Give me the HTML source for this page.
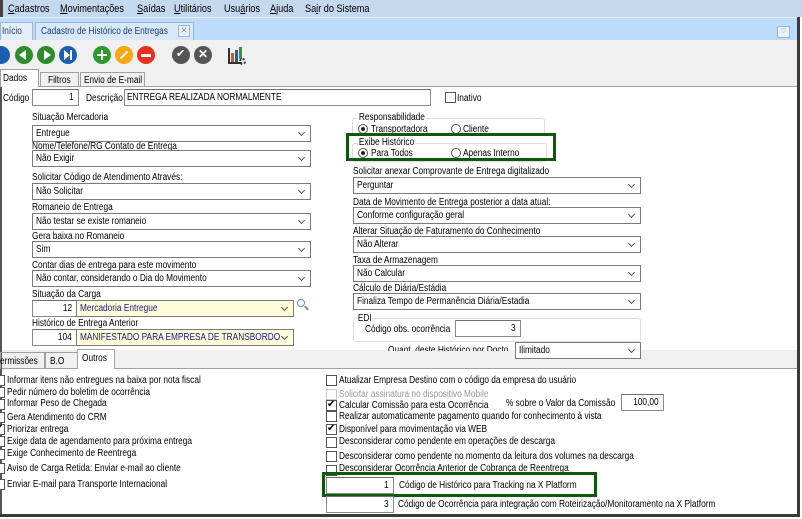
<!DOCTYPE html>
<html><head><meta charset="utf-8"><style>
*{box-sizing:border-box;margin:0;padding:0}
body{width:802px;height:519px;overflow:hidden;background:#fff;font-family:"Liberation Sans",Arial,sans-serif;font-size:10px;color:#000;position:relative}
.a{position:absolute;white-space:nowrap}
.t{transform:scaleX(.83);transform-origin:0 0}
.inp{position:absolute;background:#fff;border:1px solid #8a8a8a;border-top-color:#6e6e6e;height:17px;line-height:15px;padding:0 4px;font-size:10px;white-space:nowrap;overflow:hidden}
.inp span,.sel span{display:inline-block;transform:scaleX(.83);transform-origin:0 0}
.r{text-align:right}
.r span{transform-origin:100% 0}
.sel{position:absolute;background:#fff;border:1px solid #7a7a7a;height:17px;line-height:15px;padding:0 3px;font-size:10px;white-space:nowrap;overflow:hidden}
.sel:after{content:"";position:absolute;right:6px;top:4px;width:4px;height:4px;border-right:1.3px solid #555;border-bottom:1.3px solid #555;transform:rotate(45deg)}
.cb{position:absolute;width:11px;height:11px;border:1px solid #555;background:#fff}
.ck:before{content:"✔";position:absolute;left:0;top:-3px;font-size:10px;line-height:13px}
.fs{position:absolute;border:1px solid #dcdcdc;border-radius:3px}
.rad{position:absolute;width:10px;height:10px;border:1px solid #555;border-radius:50%;background:#fff}
.on:after{content:"";position:absolute;left:2px;top:2px;width:4px;height:4px;border-radius:50%;background:#222}
.ic{position:absolute;width:18px;height:18px;border-radius:50%;top:46px}
.grn{position:absolute;border:3px solid #0d5a0d}
.m{font-size:11px;top:3px}
</style></head><body>
<!-- menu -->
<div class="a" style="left:0;top:0;width:802px;height:17px;background:#c5d9ee"></div>
<div class="a" style="left:0;top:0;width:3px;height:17px;background:#444"></div>
<div class="a t m" style="left:8px"><u>C</u>adastros</div>
<div class="a t m" style="left:60px"><u>M</u>ovimentações</div>
<div class="a t m" style="left:137px"><u>S</u>aídas</div>
<div class="a t m" style="left:174px"><u>U</u>tilitários</div>
<div class="a t m" style="left:224px">Usu<u>á</u>rios</div>
<div class="a t m" style="left:270px"><u>A</u>juda</div>
<div class="a t m" style="left:305px">Sa<u>i</u>r do Sistema</div>
<!-- tabs bar -->
<div class="a" style="left:0;top:17px;width:797px;height:23px;background:#bddcfb;border-top:1px solid #e6f0fa"></div>
<div class="a" style="left:0;top:22px;width:33px;height:18px;background:#e4effb;border:1px solid #9cb6d2;border-bottom:none"></div>
<div class="a t" style="left:2px;top:26px;color:#1d3c6a">Início</div>
<div class="a" style="left:35px;top:22px;width:159px;height:18px;background:#d8e8f9;border:1px solid #9cb6d2;border-bottom:none"></div>
<div class="a t" style="left:41px;top:26px;color:#1d3c6a">Cadastro de Histórico de Entregas</div>
<div class="a" style="left:178px;top:25px;width:12px;height:12px;border:1px solid #9cb6d2;background:#e8f0f8;font-size:8px;line-height:10px;text-align:center;color:#888">✕</div>
<div class="a" style="left:777px;top:26px;width:13px;height:12px;border:1px solid #9cb6d2;background:#e8f0f8;font-size:7px;line-height:10px;text-align:center;color:#888">♡</div>
<!-- toolbar -->
<div class="a" style="left:0;top:40px;width:797px;height:30px;background:#f0f0f0"></div>
<div class="ic" style="left:-8px;background:#1a5fb4"></div>
<div class="ic" style="left:15px;background:#2e8b2e"></div><div class="a" style="left:19px;top:50px;width:0;height:0;border:5px solid transparent;border-right:7px solid #fff;border-left:none"></div>
<div class="ic" style="left:37px;background:#2e8b2e"></div><div class="a" style="left:44px;top:50px;width:0;height:0;border:5px solid transparent;border-left:7px solid #fff;border-right:none"></div>
<div class="ic" style="left:59px;background:#1a5fb4"></div><div class="a" style="left:64px;top:50px;width:0;height:0;border:5px solid transparent;border-left:6px solid #fff;border-right:none"></div><div class="a" style="left:70px;top:50px;width:2px;height:10px;background:#fff"></div>
<div class="ic" style="left:93px;background:#2e9a2e"></div><div class="a" style="left:97px;top:54px;width:10px;height:2px;background:#fff"></div><div class="a" style="left:101px;top:50px;width:2px;height:10px;background:#fff"></div>
<div class="ic" style="left:115px;background:#f5a80f"></div><div class="a" style="left:119px;top:54px;width:10px;height:2px;background:#fff;transform:rotate(-45deg)"></div>
<div class="ic" style="left:137px;background:#e8301f"></div><div class="a" style="left:141px;top:54px;width:10px;height:3px;background:#fff"></div>
<div class="ic" style="left:172px;background:#555"></div><div class="a" style="left:176px;top:47px;color:#fff;font-size:11px">✔</div>
<div class="ic" style="left:194px;background:#555"></div><div class="a" style="left:198px;top:47px;color:#fff;font-size:12px;font-weight:bold">✕</div>
<div class="a" style="left:228px;top:48px;width:2px;height:15px;background:#333"></div><div class="a" style="left:228px;top:62px;width:14px;height:2px;background:#333"></div>
<div class="a" style="left:231px;top:53px;width:3px;height:9px;background:#e8501f"></div><div class="a" style="left:235px;top:50px;width:3px;height:12px;background:#1a5fb4"></div><div class="a" style="left:239px;top:47px;width:3px;height:12px;background:#2e9a2e"></div>
<div class="a" style="left:239px;top:58px;width:7px;height:7px;border-radius:50%;border:2px dotted #333"></div>
<!-- form tabs -->
<div class="a" style="left:0;top:70px;width:797px;height:16px;background:#f0f0f0"></div>
<div class="a" style="left:0;top:86px;width:797px;height:1px;background:#a0a0a0"></div>
<div class="a" style="left:0;top:69px;width:39px;height:18px;background:#fff;border:1px solid #a0a0a0;border-bottom:none"></div>
<div class="a t" style="left:3px;top:73px">Dados</div>
<div class="a" style="left:40px;top:72px;width:39px;height:15px;border:1px solid #a0a0a0;border-bottom:none"></div>
<div class="a t" style="left:48px;top:75px">Filtros</div>
<div class="a" style="left:80px;top:72px;width:65px;height:15px;border:1px solid #a0a0a0;border-bottom:none"></div>
<div class="a t" style="left:84px;top:75px">Envio de E-mail</div>
<div class="a" style="left:0;top:87px;width:2px;height:430px;background:#555"></div>
<div class="a" style="left:797px;top:17px;width:3px;height:500px;background:#3a3a3a"></div>
<div class="a" style="left:0;top:514px;width:800px;height:3px;background:#3a3a3a"></div>
<!-- row 1 -->
<div class="a t" style="left:3px;top:93px">Código</div>
<div class="inp r" style="left:32px;top:89px;width:47px"><span>1</span></div>
<div class="a t" style="left:86px;top:93px">Descrição</div>
<div class="inp" style="left:124px;top:89px;width:307px;padding-left:2px"><span>ENTREGA REALIZADA NORMALMENTE</span></div>
<div class="cb" style="left:445px;top:92px"></div><div class="a t" style="left:457px;top:93px">Inativo</div>
<!-- left column -->
<div class="a t" style="left:32px;top:112px">Situação Mercadoria</div>
<div class="sel" style="left:32px;top:125px;width:279px"><span>Entregue</span></div>
<div class="a t" style="left:32px;top:141px;text-decoration:underline">Nome/Telefone/RG Contato de Entrega</div>
<div class="sel" style="left:32px;top:150px;width:279px"><span>Não Exigir</span></div>
<div class="a t" style="left:32px;top:172px">Solicitar Código de Atendimento Através:</div>
<div class="sel" style="left:32px;top:183px;width:279px"><span>Não Solicitar</span></div>
<div class="a t" style="left:32px;top:202px">Romaneio de Entrega</div>
<div class="sel" style="left:32px;top:213px;width:279px"><span>Não testar se existe romaneio</span></div>
<div class="a t" style="left:32px;top:231px">Gera baixa no Romaneio</div>
<div class="sel" style="left:32px;top:241px;width:279px"><span>Sim</span></div>
<div class="a t" style="left:32px;top:260px">Contar dias de entrega para este movimento</div>
<div class="sel" style="left:32px;top:270px;width:279px"><span>Não contar, considerando o Dia do Movimento</span></div>
<div class="a t" style="left:32px;top:289px">Situação da Carga</div>
<div class="inp r" style="left:32px;top:300px;width:45px"><span>12</span></div>
<div class="sel" style="left:76px;top:300px;width:218px;background:#fefbd8;color:#1a1a8c"><span>Mercadoria Entregue</span></div>
<div class="a" style="left:297px;top:299px;width:8px;height:8px;border:1.5px solid #6a8fb0;border-radius:50%"></div><div class="a" style="left:304px;top:307px;width:5px;height:2px;background:#888;transform:rotate(45deg)"></div>
<div class="a t" style="left:32px;top:318px">Histórico de Entrega Anterior</div>
<div class="inp r" style="left:32px;top:329px;width:45px"><span>104</span></div>
<div class="sel" style="left:76px;top:329px;width:218px;background:#fefbd8;color:#1a1a8c"><span>MANIFESTADO PARA EMPRESA DE TRANSBORDO</span></div>
<!-- right column -->
<div class="fs" style="left:352px;top:118px;width:193px;height:18px"></div>
<div class="a t" style="left:358px;top:112px;background:#fff;padding:0 1px">Responsabilidade</div>
<div class="rad on" style="left:358px;top:124px"></div><div class="a t" style="left:371px;top:124px">Transportadora</div>
<div class="rad" style="left:451px;top:124px"></div><div class="a t" style="left:463px;top:124px">Cliente</div>
<div class="fs" style="left:352px;top:143px;width:195px;height:19px"></div>
<div class="a t" style="left:358px;top:137px;background:#fff;padding:0 1px">Exibe Histórico</div>
<div class="rad on" style="left:358px;top:148px"></div><div class="a t" style="left:371px;top:148px">Para Todos</div>
<div class="rad" style="left:451px;top:148px"></div><div class="a t" style="left:463px;top:148px">Apenas Interno</div>
<div class="grn" style="left:346px;top:133px;width:210px;height:28px"></div>
<div class="a t" style="left:353px;top:166px">Solicitar anexar Comprovante de Entrega digitalizado</div>
<div class="sel" style="left:353px;top:177px;width:288px"><span>Perguntar</span></div>
<div class="a t" style="left:353px;top:197px">Data de Movimento de Entrega posterior a data atual:</div>
<div class="sel" style="left:353px;top:207px;width:288px"><span>Conforme configuração geral</span></div>
<div class="a t" style="left:353px;top:226px">Alterar Situação de Faturamento do Conhecimento</div>
<div class="sel" style="left:353px;top:236px;width:288px"><span>Não Alterar</span></div>
<div class="a t" style="left:353px;top:255px">Taxa de Armazenagem</div>
<div class="sel" style="left:353px;top:265px;width:288px"><span>Não Calcular</span></div>
<div class="a t" style="left:353px;top:283px">Cálculo de Diária/Estádia</div>
<div class="sel" style="left:353px;top:293px;width:288px"><span>Finaliza Tempo de Permanência Diária/Estadia</span></div>
<div class="fs" style="left:353px;top:318px;width:288px;height:24px"></div>
<div class="a t" style="left:357px;top:313px;background:#fff;padding:0 1px">EDI</div>
<div class="a t" style="left:365px;top:324px">Código obs. ocorrência</div>
<div class="inp r" style="left:455px;top:320px;width:66px"><span>3</span></div>
<!-- lower tab strip -->
<div class="a" style="left:2px;top:350px;width:795px;height:18px;background:#f0f0f0"></div>
<div class="a" style="left:388px;top:345px;width:128px;height:6px;overflow:hidden"><div class="t" style="position:absolute;top:0;white-space:nowrap">Quant. deste Histórico por Docto</div></div>
<div class="sel" style="left:515px;top:342px;width:126px"><span>Ilimitado</span></div>
<div class="a" style="left:2px;top:368px;width:795px;height:1px;background:#a0a0a0"></div>
<div class="a" style="left:0;top:352px;width:45px;height:17px;border:1px solid #a0a0a0;border-bottom:none"></div>
<div class="a t" style="left:0;top:356px">ermissões</div>
<div class="a" style="left:45px;top:352px;width:33px;height:17px;border:1px solid #a0a0a0;border-bottom:none"></div>
<div class="a t" style="left:50px;top:356px">B.O</div>
<div class="a" style="left:77px;top:349px;width:38px;height:20px;background:#fff;border:1px solid #a0a0a0;border-bottom:none"></div>
<div class="a t" style="left:82px;top:353px">Outros</div>
<!-- left checks -->
<div class="cb" style="left:-6px;top:375px"></div><div class="a t" style="left:7px;top:375px">Informar itens não entregues na baixa por nota fiscal</div>
<div class="cb" style="left:-6px;top:387px"></div><div class="a t" style="left:7px;top:387px">Pedir número do boletim de ocorrência</div>
<div class="cb" style="left:-6px;top:399px"></div><div class="a t" style="left:7px;top:398px">Informar Peso de Chegada</div>
<div class="cb" style="left:-6px;top:412px"></div><div class="a t" style="left:7px;top:412px">Gera Atendimento do CRM</div>
<div class="cb ck" style="left:-6px;top:424px"></div><div class="a t" style="left:7px;top:424px">Priorizar entrega</div>
<div class="cb" style="left:-6px;top:436px"></div><div class="a t" style="left:7px;top:436px">Exige data de agendamento para próxima entrega</div>
<div class="cb" style="left:-6px;top:449px"></div><div class="a t" style="left:7px;top:448px">Exige Conhecimento de Reentrega</div>
<div class="cb" style="left:-6px;top:463px"></div><div class="a t" style="left:7px;top:463px">Aviso de Carga Retida: Enviar e-mail ao cliente</div>
<div class="cb" style="left:-6px;top:479px"></div><div class="a t" style="left:7px;top:479px">Enviar E-mail para Transporte Internacional</div>
<!-- right checks -->
<div class="cb" style="left:326px;top:375px"></div><div class="a t" style="left:339px;top:375px">Atualizar Empresa Destino com o código da empresa do usuário</div>
<div class="cb" style="left:326px;top:389px;border-color:#ccc"></div><div class="a t" style="left:339px;top:389px;color:#999">Solicitar assinatura no dispositivo Mobile</div>
<div class="cb ck" style="left:326px;top:400px"></div><div class="a t" style="left:339px;top:400px">Calcular Comissão para esta Ocorrência</div>
<div class="a t" style="left:506px;top:398px">% sobre o Valor da Comissão</div>
<div class="inp r" style="left:621px;top:394px;width:43px"><span>100,00</span></div>
<div class="cb" style="left:326px;top:411px"></div><div class="a t" style="left:339px;top:411px">Realizar automaticamente pagamento quando for conhecimento à vista</div>
<div class="cb ck" style="left:326px;top:424px"></div><div class="a t" style="left:339px;top:424px">Disponível para movimentação via WEB</div>
<div class="cb" style="left:326px;top:437px"></div><div class="a t" style="left:339px;top:436px">Desconsiderar como pendente em operações de descarga</div>
<div class="cb" style="left:326px;top:451px"></div><div class="a t" style="left:339px;top:451px">Desconsiderar como pendente no momento da leitura dos volumes na descarga</div>
<div class="cb" style="left:326px;top:465px"></div><div class="a t" style="left:339px;top:463px">Desconsiderar Ocorrência Anterior de Cobrança de Reentrega</div>
<div class="inp r" style="left:326px;top:477px;width:68px"><span>1</span></div>
<div class="a t" style="left:399px;top:480px">Código de Histórico para Tracking na X Platform</div>
<div class="grn" style="left:322px;top:472px;width:275px;height:25px"></div>
<div class="inp r" style="left:326px;top:496px;width:68px"><span>3</span></div>
<div class="a t" style="left:398px;top:499px">Código de Ocorrência para integração com Roteirização/Monitoramento na X Platform</div>
</body></html>
